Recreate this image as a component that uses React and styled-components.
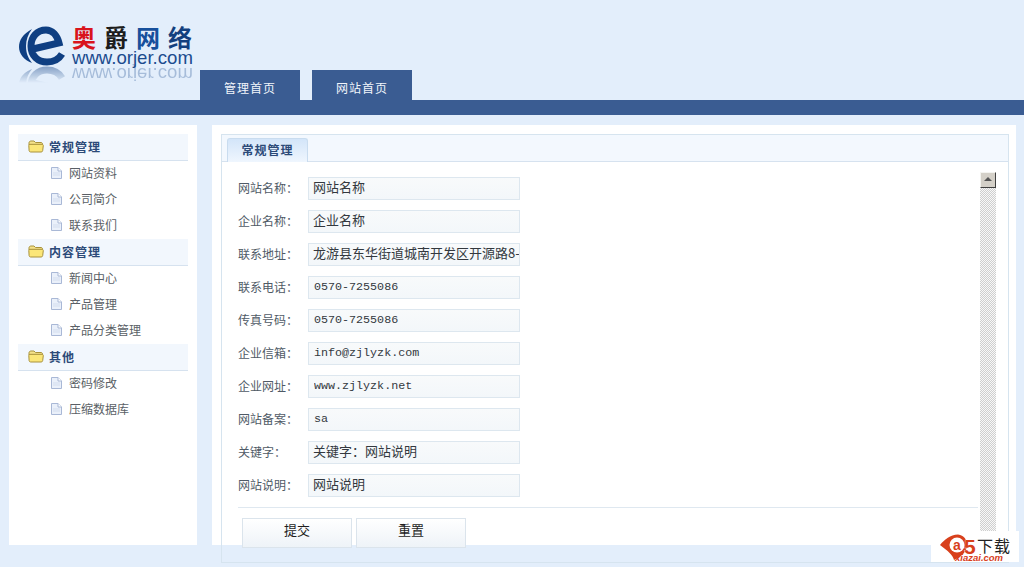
import styled, { createGlobalStyle } from 'styled-components';

const menu = [
  { title: '常规管理', items: ['网站资料', '公司简介', '联系我们'] },
  { title: '内容管理', items: ['新闻中心', '产品管理', '产品分类管理'] },
  { title: '其他', items: ['密码修改', '压缩数据库'] },
];

const fields = [
  { label: '网站名称：', value: '网站名称' },
  { label: '企业名称：', value: '企业名称' },
  { label: '联系地址：', value: '龙游县东华街道城南开发区开源路8-1号' },
  { label: '联系电话：', value: '0570-7255086', mono: true },
  { label: '传真号码：', value: '0570-7255086', mono: true },
  { label: '企业信箱：', value: 'info@zjlyzk.com', mono: true },
  { label: '企业网址：', value: 'www.zjlyzk.net', mono: true },
  { label: '网站备案：', value: 'sa', mono: true },
  { label: '关键字：', value: '关键字：网站说明' },
  { label: '网站说明：', value: '网站说明' },
];

function LogoMark() {
  const mark = (
    <>
      <path d="M13 4C4 9 0 15 0 22C0 29 5 35 13 38C9 33 7 28 7 21C7 15 9 9 13 4Z" fill="#0f3f82" />
      <path d="M14 24L40 18C38 10 33 5 27 5C18 5 12 12 12 21C12 31 19 37 28 37C35 37 40 34 43 29" fill="none" stroke="#0f3f82" strokeWidth="7" />
    </>
  );
  return (
    <svg width="46" height="58" viewBox="0 0 46 58">
      <defs>
        <linearGradient id="fade" x1="0" y1="41" x2="0" y2="58" gradientUnits="userSpaceOnUse">
          <stop offset="0" stopColor="#fff" stopOpacity="0.45" />
          <stop offset="1" stopColor="#fff" stopOpacity="0" />
        </linearGradient>
        <mask id="fadeMask">
          <rect x="0" y="41" width="46" height="17" fill="url(#fade)" />
        </mask>
      </defs>
      {mark}
      <g mask="url(#fadeMask)">
        <g transform="translate(0 82) scale(1 -1)">{mark}</g>
      </g>
    </svg>
  );
}

function FolderIcon() {
  return (
    <svg width="16" height="13" viewBox="0 0 16 13">
      <path d="M1 3C1 1.8 1.8 1 3 1H6L7.5 2.5H13C14 2.5 14.5 3.2 14.5 4V5H1Z" fill="#f5e28a" stroke="#a8923c" />
      <path d="M.8 5.5C.8 4.8 1.4 4.3 2 4.3H14C14.8 4.3 15.4 4.8 15.3 5.6L14.7 10.6C14.6 11.4 14 12 13.2 12H2.6C1.8 12 1.2 11.4 1.1 10.6Z" fill="#fbe678" stroke="#a8923c" />
    </svg>
  );
}

function DocIcon() {
  return (
    <svg width="11" height="12" viewBox="0 0 11 12">
      <path d="M.5 .5H7L10.5 4V11.5H.5Z" fill="#eaf0fa" stroke="#a9b8d6" />
      <path d="M7 .5V4H10.5" fill="#fff" stroke="#a9b8d6" />
      <path d="M2 6H9M2 8H9" stroke="#d3ddee" />
    </svg>
  );
}

function A5Mark() {
  return (
    <svg width="41" height="27" viewBox="0 0 41 27">
      <path d="M4 11C9 5 14 1 22 0.500C28 1 31 6 31 11C31 18 25 23 18 26C17 21 12 17 4 11Z" fill="#d8401c" />
      <circle cx="21" cy="11" r="7.500" fill="#fff" />
      <text x="21" y="15.500" textAnchor="middle" fontFamily="Liberation Sans" fontWeight="700" fontSize="14" fill="#d8401c">a</text>
      <text x="28" y="20" fontFamily="Liberation Sans" fontWeight="700" fontSize="21" fill="#d8401c" stroke="#fff" strokeWidth="0.6" paintOrder="stroke">5</text>
    </svg>
  );
}

export default function App() {
  return (
    <Page>
      <GlobalStyle />
      <Header>
        <Logo>
          <LogoMark />
          <LogoText>
            <LogoTitle>
              <span style={{ color: '#d9141c' }}>奥</span>
              <span style={{ color: '#1c1c1c' }}>爵</span>
              <span style={{ color: '#17509c' }}>网</span>
              <span style={{ color: '#123f7e' }}>络</span>
            </LogoTitle>
            <LogoUrl>www.orjer.com</LogoUrl>
            <LogoReflection>www.orjer.com</LogoReflection>
          </LogoText>
        </Logo>
        <Nav>
          <NavTab>管理首页</NavTab>
          <NavTab>网站首页</NavTab>
        </Nav>
      </Header>
      <Bar />
      <Content>
        <Sidebar>
          {menu.map(section => (
            <div key={section.title}>
              <SectionTitle>
                <FolderIcon />
                <span>{section.title}</span>
              </SectionTitle>
              {section.items.map(item => (
                <MenuItem key={item}>
                  <DocIcon />
                  <span>{item}</span>
                </MenuItem>
              ))}
            </div>
          ))}
        </Sidebar>
        <Main>
          <Panel>
            <PanelHead>
              <PanelTab>常规管理</PanelTab>
            </PanelHead>
            <PanelBody>
              <Form>
                {fields.map(field => (
                  <Row key={field.label}>
                    <Label>{field.label}</Label>
                    <Input readOnly defaultValue={field.value} $mono={field.mono} />
                  </Row>
                ))}
                <Divider />
                <Buttons>
                  <Button type="button">提交</Button>
                  <Button type="button">重置</Button>
                </Buttons>
              </Form>
              <Scrollbar>
                <ScrollUp />
              </Scrollbar>
            </PanelBody>
          </Panel>
        </Main>
      </Content>
      <Watermark>
        <A5Mark />
        <WatermarkText>下载</WatermarkText>
        <WatermarkUrl>xiazai.com</WatermarkUrl>
      </Watermark>
    </Page>
  );
}

const GlobalStyle = createGlobalStyle`
  html, body {
    margin: 0;
    padding: 0;
    background: #e3eefb;
  }
  * {
    box-sizing: border-box;
  }
`;

const Page = styled.div`
  position: relative;
  width: 1024px;
  height: 567px;
  overflow: hidden;
  background: #e3eefb;
  font-family: "Noto Sans CJK SC", "Liberation Sans", sans-serif;
  font-size: 12px;
`;

const Header = styled.div`
  height: 100px;
  display: flex;
  align-items: flex-end;
`;

const Logo = styled.div`
  width: 200px;
  height: 100px;
  padding: 25px 0 0 19px;
  display: flex;
  gap: 7px;
`;

const LogoText = styled.div`
  display: flex;
  flex-direction: column;
`;

const LogoTitle = styled.div`
  height: 24px;
  font-size: 24px;
  line-height: 24px;
  font-weight: 700;
  letter-spacing: 8px;
  white-space: nowrap;
`;

const LogoUrl = styled.div`
  height: 18px;
  font-family: "Liberation Sans", sans-serif;
  font-size: 18.6px;
  line-height: 18px;
  color: #1b4b8e;
  white-space: nowrap;
`;

const LogoReflection = styled(LogoUrl)`
  height: 14px;
  line-height: 14px;
  transform: scaleY(-1);
  opacity: 0.3;
`;

const Nav = styled.div`
  display: flex;
  gap: 12px;
`;

const NavTab = styled.div`
  width: 100px;
  height: 30px;
  background: #3a5c92;
  color: #f1f5fb;
  line-height: 36px;
  text-align: center;
  letter-spacing: 1px;
`;

const Bar = styled.div`
  height: 15px;
  background: #3a5c92;
`;

const Content = styled.div`
  display: flex;
  padding: 10px 0 0 9px;
  gap: 15px;
`;

const Sidebar = styled.div`
  width: 188px;
  height: 420px;
  padding: 9px;
  background: #fff;
`;

const SectionTitle = styled.div`
  height: 27px;
  padding: 0 0 2px 10px;
  display: flex;
  align-items: center;
  gap: 5px;
  background: #f2f7fd;
  border-bottom: 1px solid #d6e2ef;
  color: #2c4a78;
  font-weight: 700;
  letter-spacing: 1px;
`;

const MenuItem = styled.div`
  height: 26px;
  padding: 0 0 3px 33px;
  display: flex;
  align-items: center;
  gap: 7px;
  color: #5a5f66;
`;

const Main = styled.div`
  width: 804px;
  height: 420px;
  padding: 9px;
  background: #fff;
`;

const Panel = styled.div`
  width: 788px;
  height: 429px;
  border: 1px solid #d6e4ef;
`;

const PanelHead = styled.div`
  height: 27px;
  padding: 3px 0 0 5px;
  background: #f3f8fe;
  border-bottom: 1px solid #d6e2ef;
`;

const PanelTab = styled.div`
  width: 81px;
  height: 24px;
  border: 1px solid #c9dcef;
  border-bottom: none;
  border-radius: 3px 3px 0 0;
  background: linear-gradient(#d3e5f9, #eff6fe);
  color: #2c4a78;
  font-weight: 700;
  letter-spacing: 1px;
  line-height: 22px;
  text-align: center;
`;

const PanelBody = styled.div`
  display: flex;
  align-items: flex-start;
  padding: 10px 0 0 16px;
`;

const Form = styled.form`
  width: 740px;
  padding-top: 5px;
  flex-shrink: 0;
`;

const Row = styled.div`
  height: 23px;
  margin-bottom: 10px;
  display: flex;
  align-items: center;
`;

const Label = styled.label`
  width: 70px;
  padding-bottom: 3px;
  color: #4f5a66;
`;

const Input = styled.input`
  width: 212px;
  height: 23px;
  padding: 0 0 ${p => (p.$mono ? '1px' : '5px')} ${p => (p.$mono ? '5px' : '4px')};
  border: 1px solid #dde7ef;
  border-radius: 0;
  outline: none;
  background: linear-gradient(#f8fafb, #f3f7fa);
  color: #33383e;
  font-family: ${p => (p.$mono ? '"Liberation Mono", monospace' : '"Noto Sans CJK SC", sans-serif')};
  font-size: ${p => (p.$mono ? '11.7px' : '13px')};
`;

const Divider = styled.div`
  height: 1px;
  background: #dfe8f0;
`;

const Buttons = styled.div`
  display: flex;
  gap: 4px;
  padding: 10px 0 0 4px;
`;

const Button = styled.button`
  width: 110px;
  height: 30px;
  padding: 0 0 7px;
  border: 1px solid #dbe4ec;
  border-radius: 0;
  background: linear-gradient(#fff, #eef3f8);
  color: #1e1e1e;
  font-family: "Noto Sans CJK SC", sans-serif;
  font-size: 13px;
`;

const Scrollbar = styled.div`
  width: 16px;
  height: 368px;
  margin-left: 2px;
  flex-shrink: 0;
  background: repeating-conic-gradient(#cfcfcf 0 25%, #f8f8f8 0 50%) 0 0 / 2px 2px;
`;

const ScrollUp = styled.div`
  position: relative;
  width: 16px;
  height: 16px;
  background: #d4d0c8;
  border: 1px solid;
  border-color: #f4f4f0 #404040 #404040 #f4f4f0;

  &::after {
    content: '';
    position: absolute;
    left: 3px;
    top: 4px;
    border: 4px solid transparent;
    border-top: none;
    border-bottom: 4px solid #555;
  }
`;

const Watermark = styled.div`
  position: absolute;
  left: 931px;
  top: 531px;
  width: 88px;
  height: 31px;
  padding: 3px 0 0 5px;
  display: flex;
  background: #fff;
`;

const WatermarkText = styled.div`
  height: 16px;
  margin-top: 3px;
  font-size: 16px;
  line-height: 16px;
  color: #222;
  letter-spacing: 1px;
`;

const WatermarkUrl = styled.div`
  position: absolute;
  left: 24px;
  top: 22px;
  font-family: "Liberation Sans", sans-serif;
  font-size: 9.5px;
  line-height: 9px;
  font-weight: 700;
  font-style: italic;
  color: #d8401c;
`;
